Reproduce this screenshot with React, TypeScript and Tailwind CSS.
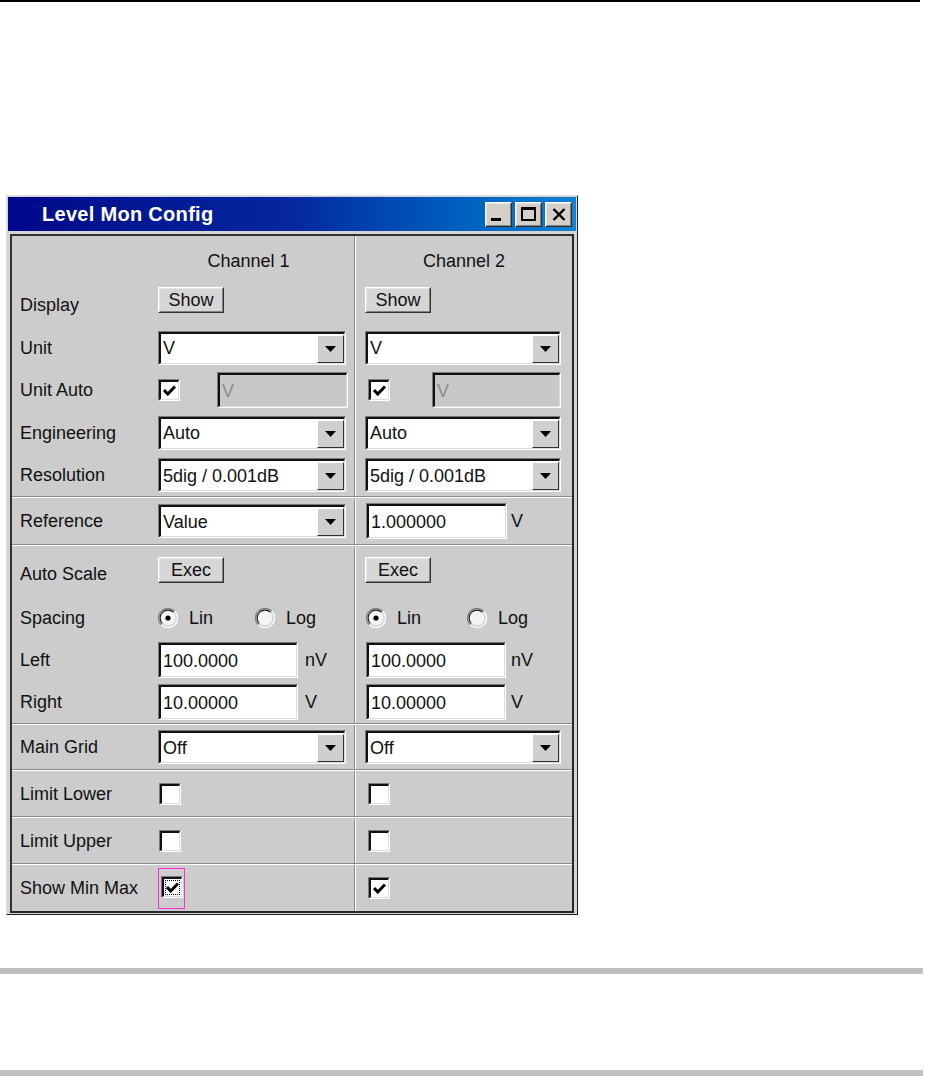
import type { ReactNode } from "react";

const sunkenOuter = "border border-t-[#7a7a7a] border-l-[#7a7a7a] border-b-white border-r-white";
const sunkenInner =
  "border border-t-2 border-l-2 border-t-[#111] border-l-[#111] border-b-[#dcdcdc] border-r-[#dcdcdc]";
const raisedOuter = "border border-t-white border-l-white border-b-[#303030] border-r-[#303030]";
const raisedInner = "border border-t-[#e6e6e6] border-l-[#e6e6e6] border-b-[#808080] border-r-[#808080]";

function Dropdown({ w, value }: { w: string; value: string }) {
  return (
    <div className={`${w} flex h-[34px] ${sunkenOuter}`}>
      <div className={`flex flex-1 bg-white ${sunkenInner}`}>
        <span className="flex-1 self-center pl-[2px] leading-none">{value}</span>
        <div className={`mt-[1px] flex w-[27px] items-center justify-center bg-[#cfcfcf] ${raisedOuter}`}>
          <svg width="11" height="6" viewBox="0 0 11 6">
            <path d="M0 0h11L5.5 6z" fill="#000" />
          </svg>
        </div>
      </div>
    </div>
  );
}

function Field({ w, value, disabled }: { w: string; value: string; disabled?: boolean }) {
  return (
    <div className={`${w} flex h-[36px] ${sunkenOuter}`}>
      <div className={`flex flex-1 items-center pl-[2px] ${sunkenInner} ${disabled ? "bg-[#c8c8c8] text-[#8c8c8c]" : "bg-white"}`}>
        <span className="leading-none">{value}</span>
      </div>
    </div>
  );
}

function Button({ label, className = "" }: { label: string; className?: string }) {
  return (
    <div className={`flex h-[26px] w-[66px] ${raisedOuter} ${className}`}>
      <div className={`flex flex-1 items-center justify-center bg-[#d6d6d6] ${raisedInner}`}>
        <span className="leading-none">{label}</span>
      </div>
    </div>
  );
}

function Checkbox({ checked, focused }: { checked?: boolean; focused?: boolean }) {
  return (
    <div className={`flex h-[22px] w-[22px] ${sunkenOuter}`}>
      <div className={`flex flex-1 bg-white p-[1px] ${sunkenInner}`}>
        <div className={`flex flex-1 items-center justify-center ${focused ? "border border-dotted border-black" : ""}`}>
          {checked && (
            <svg width="13" height="11" viewBox="0 0 13 11">
              <path d="M1 5 L4.8 9 L12 1.5" stroke="#000" strokeWidth="3" fill="none" />
            </svg>
          )}
        </div>
      </div>
    </div>
  );
}

function Radio({ checked, label }: { checked?: boolean; label: string }) {
  return (
    <div className="flex items-center">
      <svg width="20" height="20" viewBox="0 0 20 20">
        <circle cx="10" cy="10" r="8.5" fill="#f4f4f4" />
        <path d="M3.2 16.8 A9.5 9.5 0 0 1 16.8 3.2" stroke="#808080" strokeWidth="1.2" fill="none" />
        <path d="M4.4 15.6 A7.8 7.8 0 0 1 15.6 4.4" stroke="#1a1a1a" strokeWidth="1.2" fill="none" />
        <path d="M16.8 3.2 A9.5 9.5 0 0 1 3.2 16.8" stroke="#ffffff" strokeWidth="1.2" fill="none" />
        <path d="M15.6 4.4 A7.8 7.8 0 0 1 4.4 15.6" stroke="#d4d4d4" strokeWidth="1.2" fill="none" />
        {checked && <circle cx="10" cy="10" r="2.6" fill="#000" />}
      </svg>
      <span className="ml-[11px] leading-none">{label}</span>
    </div>
  );
}

function Row({
  className,
  label,
  left,
  right,
  labelClass = "",
}: {
  className: string;
  label?: string;
  left?: ReactNode;
  right?: ReactNode;
  labelClass?: string;
}) {
  return (
    <div className={`flex ${className}`}>
      <div className="flex w-[343px] items-center border-r border-[#8a8a8a]">
        <div className={`w-[146px] pl-2 leading-none ${labelClass}`}>{label}</div>
        <div className="flex flex-1 items-center">{left}</div>
      </div>
      <div className="flex flex-1 items-center border-l border-white pl-[9px]">{right}</div>
    </div>
  );
}

function TitleButton({ children, className = "" }: { children: ReactNode; className?: string }) {
  return (
    <div className={`flex h-[25px] w-[27px] ${raisedOuter} ${className}`}>
      <div className={`flex flex-1 items-center justify-center bg-[#d4d0c8] ${raisedInner}`}>{children}</div>
    </div>
  );
}

export default function App() {
  return (
    <div className="h-[1076px] w-[925px] overflow-hidden bg-white font-['Liberation_Sans',Arial,sans-serif] text-[18px] text-[#111]">
      <div className="h-[2px] w-[920px] bg-black" />

      {/* window */}
      <div className="ml-[6px] mt-[193px] w-[572px] border border-t-[#e0e0e0] border-l-[#e0e0e0] border-b-[#202020] border-r-[#202020] bg-[#d4d4d4] p-[1px]">
        <div className="flex h-[34px] items-center bg-linear-to-r from-[#00068a] via-[#0626a0] to-[#1282d2] pl-[34px] pr-[4px]">
          <span className="flex-1 text-[20px] font-bold leading-none tracking-[0.3px] text-white">Level Mon Config</span>
          <TitleButton>
            <div className="mt-[11px] mr-[5px] h-[3px] w-[10px] bg-black" />
          </TitleButton>
          <TitleButton className="ml-[3px]">
            <div className="h-[14px] w-[15px] border-2 border-t-[3px] border-black" />
          </TitleButton>
          <TitleButton className="ml-[3px]">
            <svg width="14" height="13" viewBox="0 0 14 13">
              <path d="M1.5 1 L12.5 12 M12.5 1 L1.5 12" stroke="#000" strokeWidth="2.4" />
            </svg>
          </TitleButton>
        </div>

        <div className="mx-[2px] mt-[3px] border-2 border-t-[#303030] border-l-[#303030] border-b-[#262626] border-r-[#262626] bg-[#cccccc]">
          {/* channel section */}
          <div className="border-b border-[#8a8a8a]">
            <div className="flex h-[46px]">
              <div className="flex w-[343px] border-r border-[#8a8a8a] pt-[16px]">
                <div className="w-[146px]" />
                <div className="w-[181px] text-center leading-none">Channel 1</div>
              </div>
              <div className="flex flex-1 justify-center border-l border-white pt-[16px] leading-none">Channel 2</div>
            </div>
            <Row
              className="h-[44px]"
              label="Display"
              labelClass="pt-[2px]"
              left={<Button label="Show" className="mb-[8px]" />}
              right={<Button label="Show" className="mb-[8px]" />}
            />
            <Row
              className="h-[43px]"
              label="Unit"
              left={<Dropdown w="w-[188px]" value="V" />}
              right={<Dropdown w="w-[196px]" value="V" />}
            />
            <Row
              className="h-[42px]"
              label="Unit Auto"
              left={
                <>
                  <Checkbox checked />
                  <div className="ml-[37px]">
                    <Field w="w-[131px]" value="V" disabled />
                  </div>
                </>
              }
              right={
                <>
                  <div className="ml-[3px]">
                    <Checkbox checked />
                  </div>
                  <div className="ml-[42px]">
                    <Field w="w-[129px]" value="V" disabled />
                  </div>
                </>
              }
            />
            <Row
              className="h-[43px]"
              label="Engineering"
              left={<Dropdown w="w-[188px]" value="Auto" />}
              right={<Dropdown w="w-[196px]" value="Auto" />}
            />
            <Row
              className="h-[42px]"
              label="Resolution"
              left={<Dropdown w="w-[188px]" value="5dig / 0.001dB" />}
              right={<Dropdown w="w-[196px]" value="5dig / 0.001dB" />}
            />
          </div>

          {/* reference */}
          <div className="border-t border-b border-t-white border-b-[#8a8a8a]">
            <Row
              className="h-[46px]"
              label="Reference"
              left={<Dropdown w="w-[188px]" value="Value" />}
              right={
                <>
                  <div className="ml-[1px]">
                    <Field w="w-[141px]" value="1.000000" />
                  </div>
                  <span className="ml-[4px] leading-none">V</span>
                </>
              }
            />
          </div>

          {/* scale */}
          <div className="border-t border-b border-t-white border-b-[#8a8a8a]">
            <Row
              className="h-[50px]"
              label="Auto Scale"
              labelClass="pt-[5px]"
              left={<Button label="Exec" className="mb-[2px]" />}
              right={<Button label="Exec" className="mb-[2px]" />}
            />
            <Row
              className="h-[43px]"
              label="Spacing"
              left={
                <>
                  <Radio checked label="Lin" />
                  <div className="ml-[42px]">
                    <Radio label="Log" />
                  </div>
                </>
              }
              right={
                <>
                  <div className="ml-[1px]">
                    <Radio checked label="Lin" />
                  </div>
                  <div className="ml-[46px]">
                    <Radio label="Log" />
                  </div>
                </>
              }
            />
            <Row
              className="h-[42px]"
              label="Left"
              left={
                <>
                  <Field w="w-[140px]" value="100.0000" />
                  <span className="ml-[7px] leading-none">nV</span>
                </>
              }
              right={
                <>
                  <div className="ml-[1px]">
                    <Field w="w-[140px]" value="100.0000" />
                  </div>
                  <span className="ml-[5px] leading-none">nV</span>
                </>
              }
            />
            <Row
              className="h-[42px]"
              label="Right"
              left={
                <>
                  <Field w="w-[140px]" value="10.00000" />
                  <span className="ml-[7px] leading-none">V</span>
                </>
              }
              right={
                <>
                  <div className="ml-[1px]">
                    <Field w="w-[140px]" value="10.00000" />
                  </div>
                  <span className="ml-[5px] leading-none">V</span>
                </>
              }
            />
          </div>

          {/* main grid */}
          <div className="border-t border-b border-t-white border-b-[#8a8a8a]">
            <Row
              className="h-[44px]"
              label="Main Grid"
              left={<Dropdown w="w-[188px]" value="Off" />}
              right={<Dropdown w="w-[196px]" value="Off" />}
            />
          </div>

          <div className="border-t border-b border-t-white border-b-[#8a8a8a]">
            <Row
              className="h-[45px]"
              label="Limit Lower"
              left={
                <div className="ml-[1px]">
                  <Checkbox />
                </div>
              }
              right={
                <div className="ml-[3px]">
                  <Checkbox />
                </div>
              }
            />
          </div>

          <div className="border-t border-b border-t-white border-b-[#8a8a8a]">
            <Row
              className="h-[45px]"
              label="Limit Upper"
              left={
                <div className="ml-[1px]">
                  <Checkbox />
                </div>
              }
              right={
                <div className="ml-[3px]">
                  <Checkbox />
                </div>
              }
            />
          </div>

          <div className="border-t border-t-white">
            <Row
              className="h-[46px]"
              label="Show Min Max"
              left={
                <div className="flex h-[41px] w-[27px] items-center justify-center border border-[#ff2bd6] pb-[2px]">
                  <Checkbox checked focused />
                </div>
              }
              right={
                <div className="ml-[3px]">
                  <Checkbox checked />
                </div>
              }
            />
          </div>
        </div>
      </div>

      <div className="mt-[53px] h-[6px] w-[923px] bg-[#c0c0c0]" />
      <div className="mt-[96px] h-[6px] w-[923px] bg-[#c0c0c0]" />
    </div>
  );
}
